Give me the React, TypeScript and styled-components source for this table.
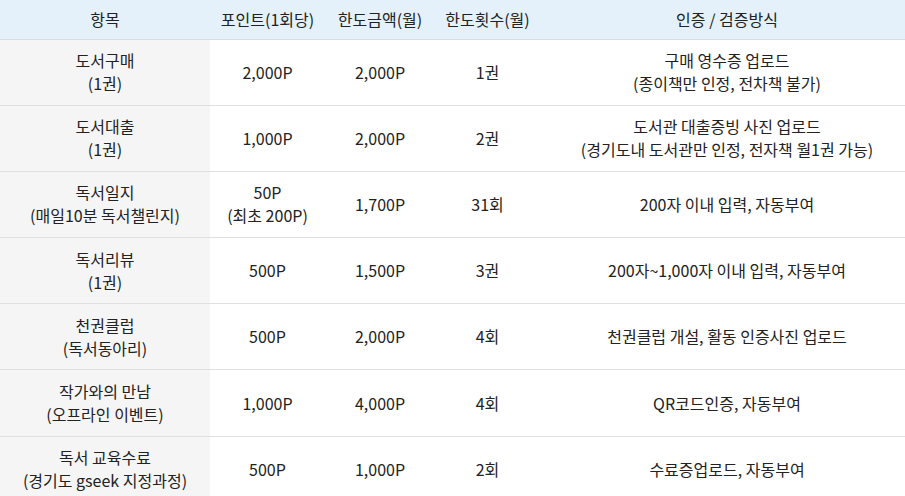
import styled, { createGlobalStyle } from "styled-components";

const GlobalStyle = createGlobalStyle`
  html, body {
    margin: 0;
    padding: 0;
    background: #fff;
    overflow: hidden;
  }
  body {
    font-family: "Noto Sans CJK KR", "Noto Sans", sans-serif;
    color: #222;
  }
`;

type Row = {
  item: string[];
  point: string[];
  amount: string;
  count: string;
  method: string[];
};

const ROWS: Row[] = [
  {
    item: ["도서구매", "(1권)"],
    point: ["2,000P"],
    amount: "2,000P",
    count: "1권",
    method: ["구매 영수증 업로드", "(종이책만 인정, 전차책 불가)"],
  },
  {
    item: ["도서대출", "(1권)"],
    point: ["1,000P"],
    amount: "2,000P",
    count: "2권",
    method: ["도서관 대출증빙 사진 업로드", "(경기도내 도서관만 인정, 전자책 월1권 가능)"],
  },
  {
    item: ["독서일지", "(매일10분 독서챌린지)"],
    point: ["50P", "(최초 200P)"],
    amount: "1,700P",
    count: "31회",
    method: ["200자 이내 입력, 자동부여"],
  },
  {
    item: ["독서리뷰", "(1권)"],
    point: ["500P"],
    amount: "1,500P",
    count: "3권",
    method: ["200자~1,000자 이내 입력, 자동부여"],
  },
  {
    item: ["천권클럽", "(독서동아리)"],
    point: ["500P"],
    amount: "2,000P",
    count: "4회",
    method: ["천권클럽 개설, 활동 인증사진 업로드"],
  },
  {
    item: ["작가와의 만남", "(오프라인 이벤트)"],
    point: ["1,000P"],
    amount: "4,000P",
    count: "4회",
    method: ["QR코드인증, 자동부여"],
  },
  {
    item: ["독서 교육수료", "(경기도 gseek 지정과정)"],
    point: ["500P"],
    amount: "1,000P",
    count: "2회",
    method: ["수료증업로드, 자동부여"],
  },
];

const Lines = ({ lines }: { lines: string[] }) => (
  <>
    {lines.map((l, i) => (
      <Line key={i}>{l}</Line>
    ))}
  </>
);

const App = () => {
  return (
    <>
      <GlobalStyle />
      <Table>
        <colgroup>
          <col style={{ width: 210 }} />
          <col style={{ width: 115 }} />
          <col style={{ width: 110 }} />
          <col style={{ width: 105 }} />
          <col style={{ width: 374 }} />
        </colgroup>
        <thead>
          <tr>
            <Th>항목</Th>
            <Th>포인트(1회당)</Th>
            <Th>한도금액(월)</Th>
            <Th>한도횟수(월)</Th>
            <Th>인증 / 검증방식</Th>
          </tr>
        </thead>
        <tbody>
          {ROWS.map((r) => (
            <tr key={r.item[0]}>
              <Td $head>
                <Lines lines={r.item} />
              </Td>
              <Td>
                <Lines lines={r.point} />
              </Td>
              <Td>{r.amount}</Td>
              <Td>{r.count}</Td>
              <Td>
                <Lines lines={r.method} />
              </Td>
            </tr>
          ))}
        </tbody>
      </Table>
    </>
  );
};

export default App;

const Table = styled.table`
  width: 914px;
  table-layout: fixed;
  border-collapse: collapse;
  font-size: 16px;
  line-height: 23px;
`;

const Th = styled.th`
  background: #e4f1fb;
  font-weight: 400;
  padding: 8px 4px 7.5px;
  text-align: center;
  border-bottom: 1px solid #d9dde0;
  white-space: nowrap;
`;

const Td = styled.td<{ $head?: boolean }>`
  background: ${({ $head }) => ($head ? "#f5f5f5" : "#fff")};
  padding: 9.6px 4px;
  height: 46px;
  text-align: center;
  vertical-align: middle;
  border-bottom: 1px solid #e0e0e0;
  white-space: nowrap;
`;

const Line = styled.div`
  display: block;
`;
